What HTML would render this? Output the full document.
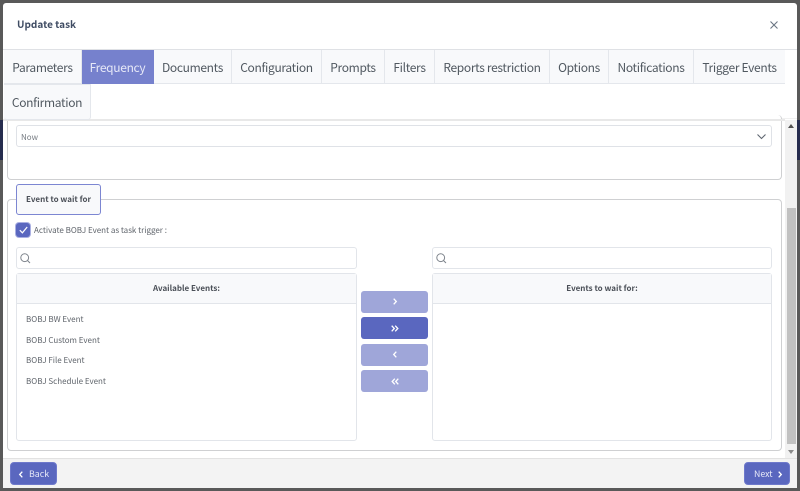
<!DOCTYPE html>
<html><head><meta charset="utf-8"><style>
*{box-sizing:border-box;margin:0;padding:0}
html,body{width:800px;height:491px;overflow:hidden;background:#595959;font-family:"Noto Sans CJK JP","Liberation Sans",sans-serif}
.a{position:absolute}
.tab{position:absolute;top:50px;height:34px;background:#f8f9fb;border-right:1px solid #e4e7ec;border-bottom:1px solid #e4e7ec;color:#505860;font-size:12px;letter-spacing:-.33px;line-height:35px;text-align:center;white-space:nowrap}
.box{position:absolute;background:#fff;border:1px solid #e2e5ea;border-radius:3px}
.fs{position:absolute;left:7px;width:775px;background:#fff;border:1px solid #cfd0d2;border-radius:4px}
.t{position:absolute;font-size:8px;color:#5f646b;line-height:12px;white-space:nowrap}
.b{position:absolute;font-size:8px;font-weight:700;color:#4a4f57;line-height:12px;white-space:nowrap;text-align:center}
.mv{position:absolute;left:361px;width:67px;height:22px;border-radius:3px;background:#9fa6d9}
.btn{position:absolute;top:462px;height:23px;border-radius:4px;background:#5a67bf;border:1px solid #6e79cb;color:#e8eaf8;font-size:8.8px;line-height:22px}
svg{position:absolute;overflow:visible}
</style></head><body>
<div class="a" style="left:0;top:120px;width:3px;height:40px;background:#262c4e"></div>
<div class="a" style="left:797px;top:120px;width:3px;height:40px;background:#262c4e"></div>
<div class="a" style="left:3px;top:3px;width:794px;height:485px;background:#fff;border-radius:3px 3px 0 0"></div>
<div class="a" style="left:17px;top:16px;font-size:10px;font-weight:700;color:#3f4c63;line-height:15px">Update task</div>
<svg style="left:770px;top:21px" width="8" height="8"><path d="M.5.5l7 7M7.5.5l-7 7" stroke="#6b7683" stroke-width="1.1" fill="none"/></svg>
<div class="a" style="left:3px;top:49px;width:794px;height:1px;background:#dfe1e5"></div>

<div class="tab" style="left:4px;width:78px">Parameters</div>
<div class="tab" style="left:82px;width:72px;background:#7681cd;color:#e6e8f7;border-color:#7681cd">Frequency</div>
<div class="tab" style="left:154px;width:78px">Documents</div>
<div class="tab" style="left:232px;width:90px">Configuration</div>
<div class="tab" style="left:322px;width:63px">Prompts</div>
<div class="tab" style="left:385px;width:50px">Filters</div>
<div class="tab" style="left:435px;width:115px">Reports restriction</div>
<div class="tab" style="left:550px;width:59px">Options</div>
<div class="tab" style="left:609px;width:85px">Notifications</div>
<div class="tab" style="left:694px;width:91px;border-right:0">Trigger Events</div>

<div class="a" style="left:91px;top:118px;width:706px;height:1px;background:#f0f0f0"></div>

<div class="fs" style="top:115px;height:65px;border-top:0"></div>
<div class="a" style="left:3px;top:119px;width:782px;height:2px;background:#e8e8e8"></div>
<div class="tab" style="left:4px;top:84px;width:87px;height:36px;line-height:35px;border-radius:0 0 3px 3px;border:1px solid #e4e7ec;border-left:0">Confirmation</div>
<div class="box" style="left:16px;top:125px;width:756px;height:22px;border-color:#dfe2e7"></div>
<div class="t" style="left:21px;top:132px;color:#777c83">Now</div>
<svg style="left:757px;top:134px" width="9" height="6"><path d="M.5.5l4 4 4-4" stroke="#5f6670" stroke-width="1.1" fill="none"/></svg>

<div class="fs" style="top:199px;height:252px"></div>
<div class="a" style="left:16px;top:184px;width:85px;height:31px;background:#f8f9fb;border:1px solid #7c86d2;border-radius:3px"></div>
<div class="b" style="left:16px;top:194px;width:85px">Event to wait for</div>

<div class="a" style="left:16px;top:223px;width:14px;height:14px;background:#5a67bf;border-radius:3px;box-shadow:0 0 0 1px #aab0e2"></div>
<svg style="left:19px;top:226px" width="9" height="8"><path d="M.8 4.2l2.6 2.6L8.2 1" stroke="#fff" stroke-width="1.2" fill="none"/></svg>
<div class="t" style="left:34px;top:225px">Activate BOBJ Event as task trigger :</div>

<div class="box" style="left:16px;top:247px;width:341px;height:22px"></div>
<svg style="left:20px;top:253px" width="11" height="11"><circle cx="4.7" cy="4.7" r="3.9" stroke="#7d838b" fill="none"/><path d="M7.6 7.6l2.4 2.4" stroke="#7d838b"/></svg>
<div class="box" style="left:432px;top:247px;width:340px;height:22px"></div>
<svg style="left:436px;top:253px" width="11" height="11"><circle cx="4.7" cy="4.7" r="3.9" stroke="#7d838b" fill="none"/><path d="M7.6 7.6l2.4 2.4" stroke="#7d838b"/></svg>

<div class="box" style="left:16px;top:273px;width:341px;height:168px"></div>
<div class="a" style="left:17px;top:274px;width:339px;height:30px;background:#f8f9fb;border-bottom:1px solid #e2e5ea"></div>
<div class="b" style="left:16px;top:283px;width:341px">Available Events:</div>
<div class="box" style="left:432px;top:273px;width:340px;height:168px"></div>
<div class="a" style="left:433px;top:274px;width:338px;height:30px;background:#f8f9fb;border-bottom:1px solid #e2e5ea"></div>
<div class="b" style="left:432px;top:283px;width:340px">Events to wait for:</div>

<div class="t" style="left:26px;top:314px">BOBJ BW Event</div>
<div class="t" style="left:26px;top:335px">BOBJ Custom Event</div>
<div class="t" style="left:26px;top:355px">BOBJ File Event</div>
<div class="t" style="left:26px;top:376px">BOBJ Schedule Event</div>

<div class="mv" style="top:291px"></div>
<svg style="left:393px;top:298px" width="4" height="7"><path d="M.7.7l2.6 2.8L.7 6.3" stroke="#fff" stroke-width="1.3" fill="none"/></svg>
<div class="mv" style="top:317px;background:#5a67bf"></div>
<svg style="left:391px;top:325px" width="8" height="7"><path d="M.7.7l2.6 2.8L.7 6.3M4.2.7l2.6 2.8-2.6 2.8" stroke="#fff" stroke-width="1.3" fill="none"/></svg>
<div class="mv" style="top:344px"></div>
<svg style="left:393px;top:351px" width="4" height="7"><path d="M3.3.7L.7 3.5l2.6 2.8" stroke="#fff" stroke-width="1.3" fill="none"/></svg>
<div class="mv" style="top:370px"></div>
<svg style="left:391px;top:378px" width="8" height="7"><path d="M3.8.7L1.2 3.5l2.6 2.8M7.3.7L4.7 3.5l2.6 2.8" stroke="#fff" stroke-width="1.3" fill="none"/></svg>

<div class="a" style="left:785px;top:120px;width:12px;height:338px;background:#f1f1f1"></div>
<div class="a" style="left:787px;top:208px;width:9px;height:236px;background:#c1c1c1"></div>
<svg style="left:788px;top:124px" width="6" height="4"><path d="M3 0l3 4H0z" fill="#505050"/></svg>
<svg style="left:788px;top:450px" width="6" height="4"><path d="M0 0h6L3 4z" fill="#8a8a8a"/></svg>

<div class="a" style="left:3px;top:458px;width:794px;height:30px;background:#f3f3f3;border-top:1px solid #e2e2e2"></div>
<div class="btn" style="left:10px;width:47px;padding-left:18px">Back</div>
<svg style="left:19px;top:471px" width="4" height="7"><path d="M3.3.7L.7 3.5l2.6 2.8" stroke="#fff" stroke-width="1.3" fill="none"/></svg>
<div class="btn" style="left:744px;width:46px;padding-left:9px">Next</div>
<svg style="left:778px;top:471px" width="4" height="7"><path d="M.7.7l2.6 2.8L.7 6.3" stroke="#fff" stroke-width="1.3" fill="none"/></svg>
</body></html>
